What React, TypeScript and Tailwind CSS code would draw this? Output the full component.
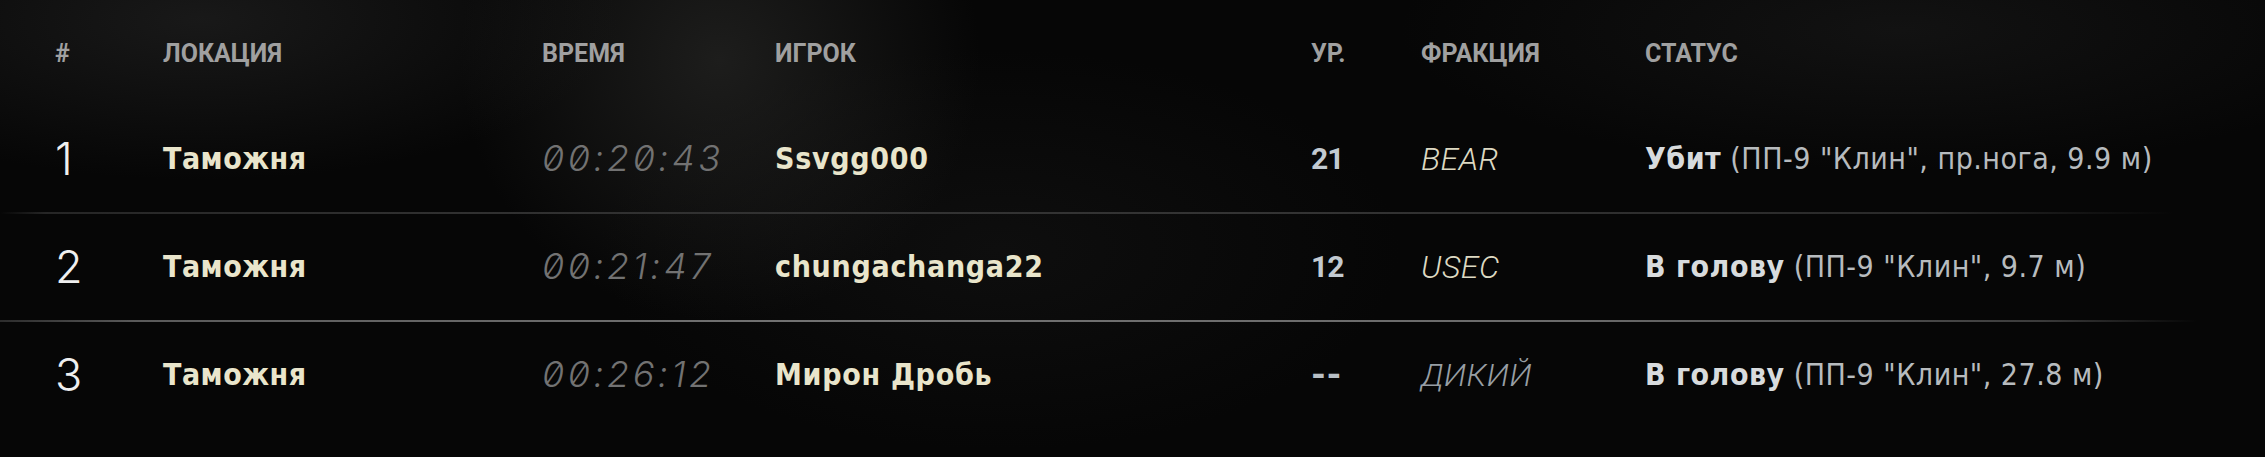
import React from "react";

type Row = {
  n: string;
  loc: string;
  time: string;
  player: string;
  level: string;
  faction: string;
  scav?: boolean;
  status: string;
  detail: string;
};

const rows: Row[] = [
  { n: "1", loc: "Таможня", time: "00:20:43", player: "Ssvgg000", level: "21", faction: "BEAR", status: "Убит", detail: '(ПП-9 "Клин", пр.нога, 9.9 м)' },
  { n: "2", loc: "Таможня", time: "00:21:47", player: "chungachanga22", level: "12", faction: "USEC", status: "В голову", detail: '(ПП-9 "Клин", 9.7 м)' },
  { n: "3", loc: "Таможня", time: "00:26:12", player: "Мирон Дробь", level: "--", faction: "ДИКИЙ", scav: true, status: "В голову", detail: '(ПП-9 "Клин", 27.8 м)' },
];

const grid = "grid grid-cols-[108px_379px_233px_536px_110px_224px_1fr] items-center pl-[55px]";
const cond = "[font-family:'DejaVu_Sans_Condensed','DejaVu_Sans',sans-serif]";
const rob = "[font-family:Roboto,'Noto_Sans',sans-serif]";

function Divider({ bright }: { bright: boolean }) {
  return bright ? (
    <div className="h-[2px] w-full bg-[linear-gradient(90deg,rgba(70,70,70,0.6)_0%,#5a5a5a_6%,#727272_35%,#6a6a6a_70%,#3c3c3c_90%,transparent_97%)]" />
  ) : (
    <div className="h-[2px] w-full bg-[linear-gradient(90deg,transparent_0%,#262626_2%,#303030_20%,#343434_55%,#2a2a2a_85%,transparent_96%)]" />
  );
}

function DataRow({ r }: { r: Row }) {
  const dashes = r.level === "--";
  return (
    <div className={`${grid} h-[106px]`}>
      <div className="text-[45px] leading-none font-light text-[#efefef] [font-family:Inter,sans-serif] pb-[1px]">
        {r.n}
      </div>
      <div className={`text-[30px] leading-none font-bold tracking-[0.5px] text-[#e9e5cb] ${cond}`}>{r.loc}</div>
      <div className="text-[36px] leading-none font-light italic tracking-[3.5px] text-[#727272] [font-family:Inter,sans-serif] [font-feature-settings:'zero'] pb-[3px]">
        {r.time}
      </div>
      <div className={`text-[30px] leading-none font-bold tracking-[0.7px] text-[#e9e5cb] ${cond}`}>{r.player}</div>
      <div
        className={`leading-none font-bold ${rob} ${
          dashes ? "text-[38px] tracking-[0.5px] text-[#b8bfc5]" : "text-[30px] tracking-[-1px] text-[#c2cad1]"
        }`}
      >
        {r.level}
      </div>
      <div className={`text-[32px] leading-none font-light italic tracking-[0.5px] ${rob} ${r.scav ? "text-[#979ea4]" : "text-[#ddd9c2]"}`}>
        {r.faction}
      </div>
      <div className={`text-[30px] leading-none whitespace-nowrap tracking-[0.5px] ${cond}`}>
        <span className="font-bold text-[#d8dbdd]">{r.status}</span>{" "}
        <span className="font-normal text-[#b7bbbe]">{r.detail}</span>
      </div>
    </div>
  );
}

export default function App() {
  return (
    <div className="w-[2265px] h-[457px] overflow-hidden bg-[#060606] bg-[radial-gradient(ellipse_420px_160px_at_200px_20px,rgba(40,40,40,0.55),transparent),radial-gradient(ellipse_260px_260px_at_720px_60px,rgba(48,48,46,0.55),transparent),radial-gradient(ellipse_500px_140px_at_1900px_30px,rgba(30,30,30,0.5),transparent),radial-gradient(ellipse_400px_200px_at_1000px_250px,rgba(22,22,22,0.5),transparent)]">
      <div className={`${grid} h-[106px] ${rob} text-[25px] leading-none font-bold text-[#a0a0a0]`}>
        <div>#</div>
        <div>ЛОКАЦИЯ</div>
        <div>ВРЕМЯ</div>
        <div>ИГРОК</div>
        <div>УР.</div>
        <div>ФРАКЦИЯ</div>
        <div>СТАТУС</div>
      </div>
      <DataRow r={rows[0]} />
      <Divider bright={false} />
      <DataRow r={rows[1]} />
      <Divider bright={true} />
      <DataRow r={rows[2]} />
    </div>
  );
}
